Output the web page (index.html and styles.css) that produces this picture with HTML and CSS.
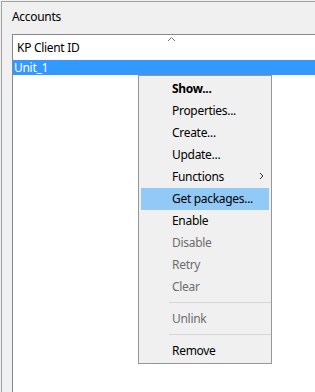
FILE: index.html
```html
<!DOCTYPE html>
<html>
<head>
<meta charset="utf-8">
<link rel="stylesheet" href="styles.css">
</head>
<body>
<div class="group">
  <div class="group-title">Accounts</div>
  <div class="list">
    <div class="list-header">
      <span class="col-title">KP Client ID</span>
      <svg class="sort-caret" width="9" height="6" viewBox="0 0 9 6"><path d="M1 5 L4.5 1.5 L8 5" fill="none" stroke="#6d6d6d" stroke-width="1"/></svg>
    </div>
    <div class="row selected">Unit_1</div>
  </div>
</div>
<div class="menu">
  <div class="item bold">Show...</div>
  <div class="item">Properties...</div>
  <div class="item">Create...</div>
  <div class="item">Update...</div>
  <div class="item sub">Functions
    <svg class="sub-arrow" width="5" height="8" viewBox="0 0 5 8"><path d="M1 1 L4 4 L1 7" fill="none" stroke="#333" stroke-width="1"/></svg>
  </div>
  <div class="item hover">Get packages...</div>
  <div class="item">Enable</div>
  <div class="item disabled">Disable</div>
  <div class="item disabled">Retry</div>
  <div class="item disabled">Clear</div>
  <div class="sep"></div>
  <div class="item disabled">Unlink</div>
  <div class="sep"></div>
  <div class="item">Remove</div>
</div>
</body>
</html>
```
FILE: styles.css
```css
html, body {
  margin: 0;
  padding: 0;
}
body {
  background: #f0f0f0;
  font-family: "Noto Sans", "Open Sans", sans-serif;
  font-size: 12px;
  letter-spacing: -0.3px;
  color: #000;
  width: 315px;
  height: 392px;
  overflow: hidden;
  position: relative;
}
.group {
  margin: 1px 0 0 1px;
  border-left: 1px solid #a0a0a0;
  border-top: 1px solid #a0a0a0;
  height: 390px;
  padding-left: 10px;
  display: flex;
  flex-direction: column;
}
.group-title {
  height: 32px;
  line-height: 18px;
  padding-top: 6px;
  box-sizing: border-box;
}
.list {
  flex: 1;
  background: #fff;
  border-left: 1px solid #828790;
  border-top: 1px solid #828790;
}
.list-header {
  position: relative;
  height: 25px;
  box-sizing: border-box;
  padding-left: 4px;
  padding-top: 4px;
  line-height: 18px;
}
.sort-caret {
  position: absolute;
  left: 154px;
  top: 1px;
}
.row {
  height: 15px;
  line-height: 15px;
  padding-left: 1px;
}
.row.selected {
  background: #3399ff;
  color: #fff;
}
.menu {
  position: absolute;
  left: 138px;
  top: 75px;
  width: 130px;
  background: #f0f0f0;
  border: 1px solid #979797;
  padding: 2px 0 1px 2px;
  box-sizing: content-box;
}
.item {
  position: relative;
  height: 22px;
  line-height: 22px;
  padding-left: 31px;
  margin-right: 2px;
  white-space: nowrap;
}
.item.bold { font-weight: bold; }
.item.hover { background: #91c9f7; }
.item.disabled { color: #6d6d6d; }
.sub-arrow {
  position: absolute;
  right: 5px;
  top: 6px;
}
.sep {
  height: 10px;
  box-sizing: border-box;
  padding-top: 4px;
  margin-left: 28px;
  margin-right: 0;
}
.sep::before {
  content: "";
  display: block;
  height: 1px;
  background: #d7d7d7;
}
```
